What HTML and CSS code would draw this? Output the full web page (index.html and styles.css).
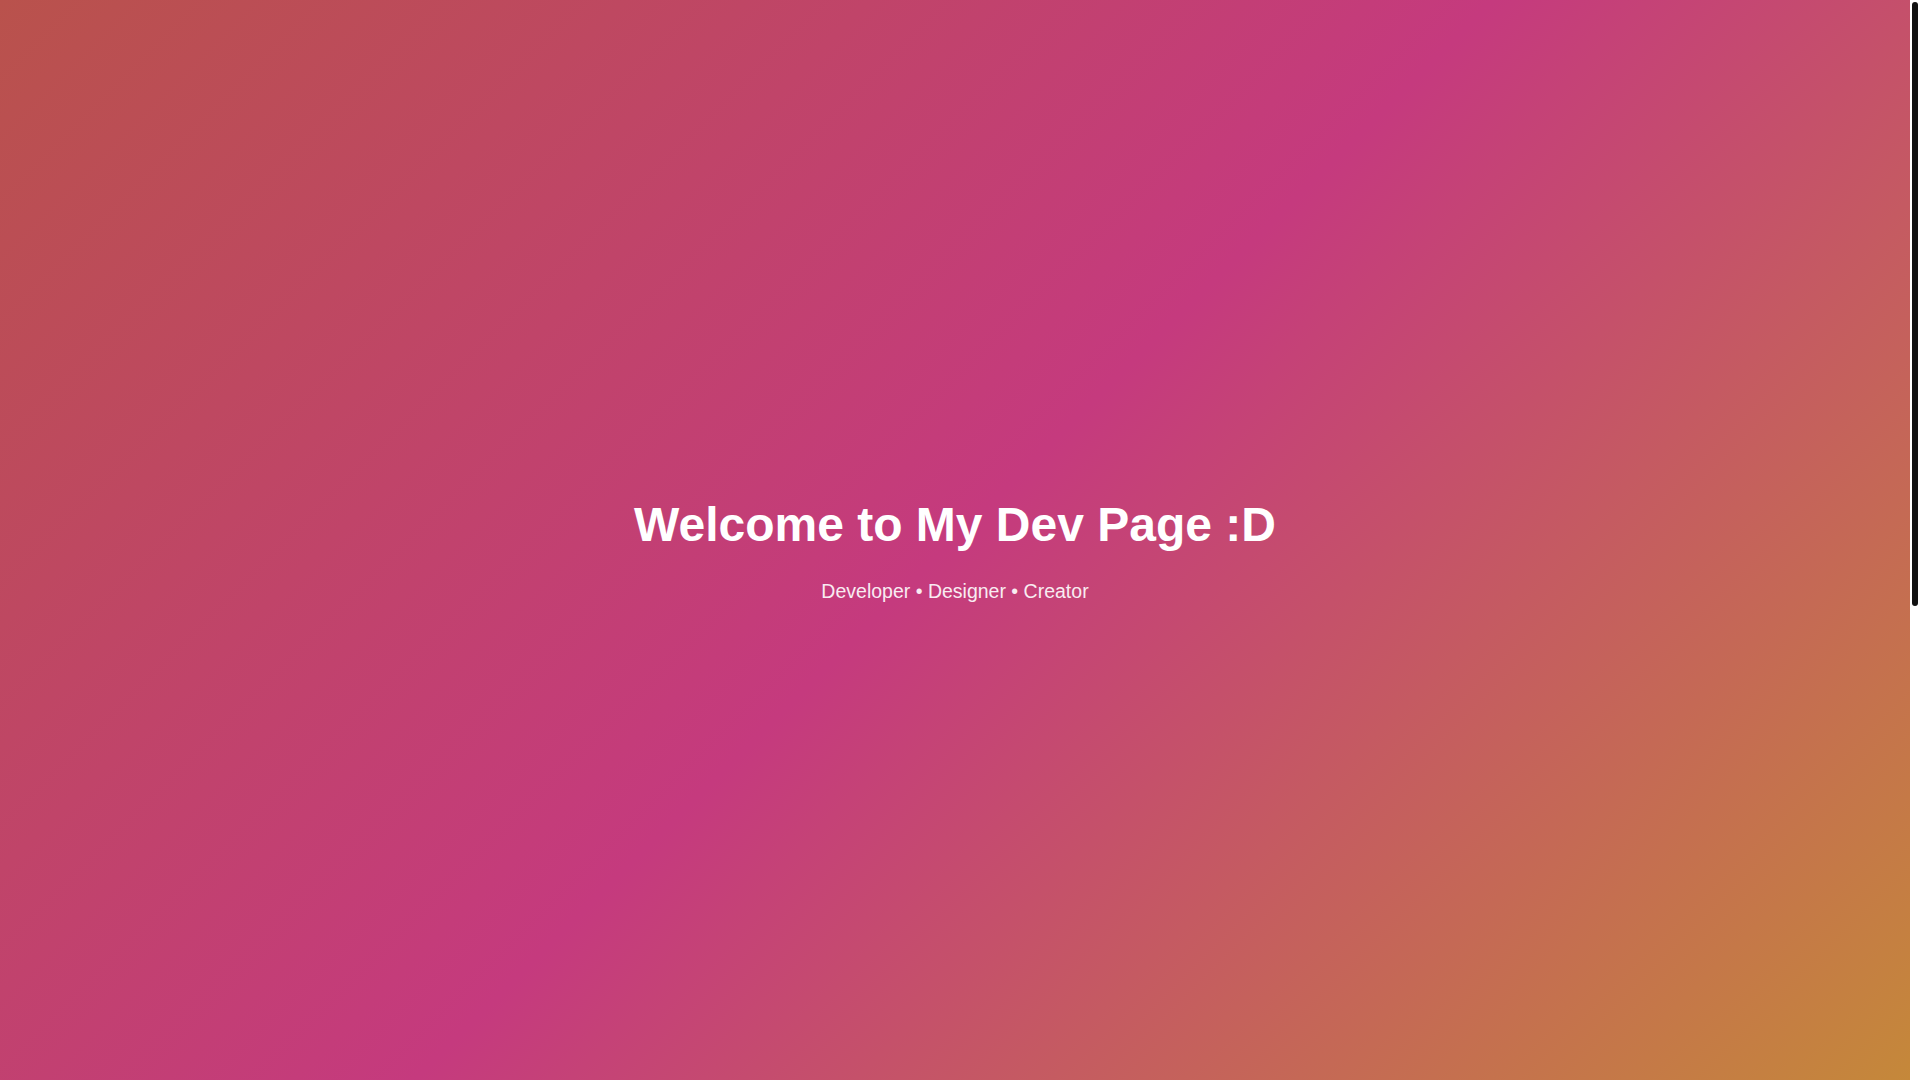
FILE: index.html
```html
<!DOCTYPE html>
<html lang="en">
<head>
<meta charset="utf-8">
<title>My Dev Page</title>
<link rel="stylesheet" href="styles.css">
</head>
<body>
  <div class="viewport">
    <header class="hero">
      <h1 class="hero-title">Welcome to My Dev Page :D</h1>
      <p class="hero-subtitle">Developer • Designer • Creator</p>
    </header>
    <div class="scroll-track" aria-hidden="true">
      <div class="scroll-thumb"></div>
    </div>
  </div>
</body>
</html>
```

FILE: styles.css
```css
html, body {
  margin: 0;
  padding: 0;
  height: 100%;
  overflow: hidden;
}

body {
  font-family: "Liberation Sans", Arial, sans-serif;
  background: #ffffff;
  color: #222;
}

.viewport {
  display: flex;
  height: 100vh;
}

.hero {
  box-sizing: border-box;
  flex: 1;
  display: flex;
  flex-direction: column;
  align-items: center;
  justify-content: center;
  padding-top: 20px;
  text-align: center;
  color: #ffffff;
  background: linear-gradient(135deg, #b9524c 0%, #c53a7e 50%, #c5883a 100%);
}

.hero-title {
  margin: 0 0 28px;
  font-size: 48px;
  font-weight: 700;
  line-height: 1.15;
}

.hero-subtitle {
  margin: 0;
  font-size: 19.5px;
  line-height: 1.15;
  opacity: 0.9;
}

.scroll-track {
  box-sizing: border-box;
  width: 10px;
  padding: 2px 2px 0;
  background: #ffffff;
}

.scroll-thumb {
  height: 604px;
  background: #111111;
  border-radius: 3px;
}
```
